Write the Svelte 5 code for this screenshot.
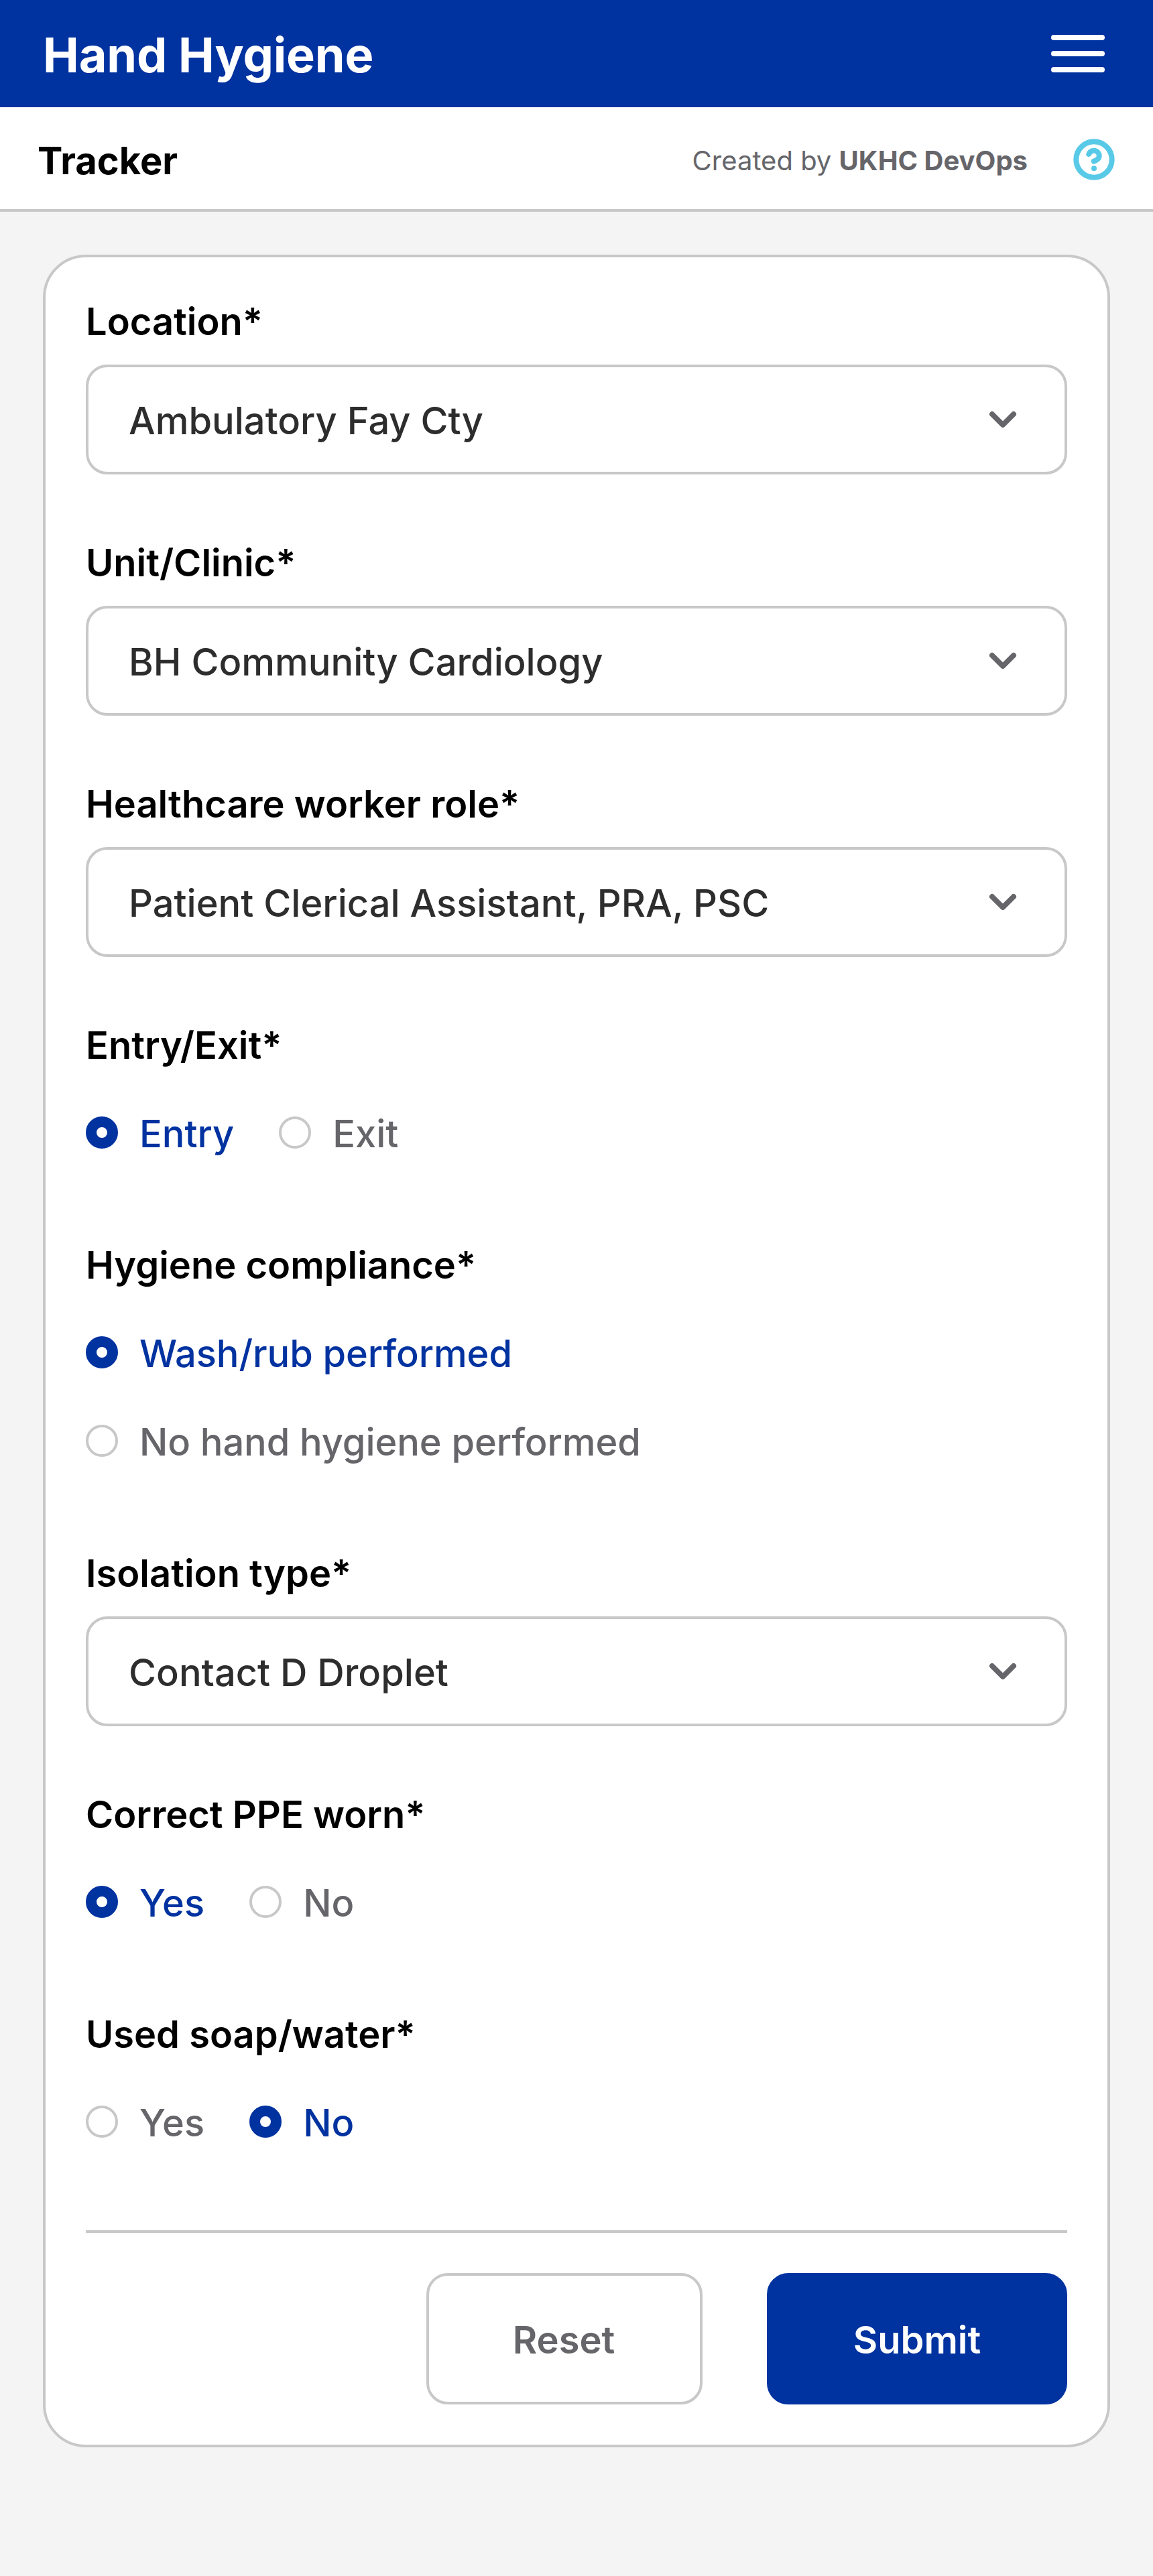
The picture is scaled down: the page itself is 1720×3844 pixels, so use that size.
<script>
  const fields = [
    { label: 'Location*', kind: 'select', value: 'Ambulatory Fay Cty' },
    { label: 'Unit/Clinic*', kind: 'select', value: 'BH Community Cardiology' },
    { label: 'Healthcare worker role*', kind: 'select', value: 'Patient Clerical Assistant, PRA, PSC' },
    { label: 'Entry/Exit*', kind: 'radio', options: ['Entry', 'Exit'], value: 'Entry' },
    {
      label: 'Hygiene compliance*',
      kind: 'radio',
      stacked: true,
      options: ['Wash/rub performed', 'No hand hygiene performed'],
      value: 'Wash/rub performed'
    },
    { label: 'Isolation type*', kind: 'select', value: 'Contact D Droplet' },
    { label: 'Correct PPE worn*', kind: 'radio', options: ['Yes', 'No'], value: 'Yes' },
    { label: 'Used soap/water*', kind: 'radio', options: ['Yes', 'No'], value: 'No' }
  ];
</script>

<div class="page">
  <header class="topbar">
    <h1>Hand Hygiene</h1>
    <div class="burger"><span></span><span></span><span></span></div>
  </header>

  <div class="subbar">
    <h2>Tracker</h2>
    <div class="credit">
      <p>Created by <b>UKHC DevOps</b></p>
      <svg class="help" viewBox="0 0 24 24" fill="none" stroke="#58cae7" stroke-width="3" stroke-linecap="round" stroke-linejoin="round">
        <circle cx="12" cy="12" r="10" />
        <path d="M9.09 9a3 3 0 0 1 5.83 1c0 2-3 3-3 3" />
        <path d="M12 17h.01" />
      </svg>
    </div>
  </div>

  <main class="card">
    {#each fields as field}
      <section class="field">
        <h3>{field.label}</h3>
        {#if field.kind === 'select'}
          <div class="select">
            <span>{field.value}</span>
            <svg viewBox="0 0 24 24" fill="none" stroke="#65656a" stroke-width="3" stroke-linecap="round" stroke-linejoin="round">
              <path d="M6 9l6 6 6-6" />
            </svg>
          </div>
        {:else}
          <div class="options" class:stacked={field.stacked}>
            {#each field.options as option}
              <div class="option" class:selected={option === field.value}>
                <i></i><span>{option}</span>
              </div>
            {/each}
          </div>
        {/if}
      </section>
    {/each}

    <footer class="actions">
      <button class="reset">Reset</button>
      <button class="submit">Submit</button>
    </footer>
  </main>
</div>

<style>
  :global(body) {
    background: #f4f4f4;
  }
  .page {
    min-height: 3844px;
    box-sizing: border-box;
    background: #f4f4f4;
    font-family: Inter, 'Liberation Sans', sans-serif;
    font-size: 56px;
    line-height: 68px;
    color: #000;
  }
  h1, h2, h3, p {
    margin: 0;
  }
  .topbar {
    display: flex;
    align-items: center;
    justify-content: space-between;
    height: 160px;
    padding: 0 72px 0 64px;
    box-sizing: border-box;
    background: #0032a0;
    color: #fff;
  }
  h1 {
    font-size: 72px;
    line-height: 88px;
    font-weight: 700;
    letter-spacing: -0.15px;
    padding-top: 4px;
  }
  .burger {
    display: flex;
    flex-direction: column;
    gap: 16px;
  }
  .burger span {
    width: 80px;
    height: 8px;
    border-radius: 4px;
    background: #fff;
  }
  .subbar {
    display: flex;
    align-items: center;
    justify-content: space-between;
    height: 156px;
    padding: 4px 56px 0;
    box-sizing: border-box;
    border-bottom: 4px solid #c8c8c8;
    background: #fff;
  }
  h2 {
    font-size: 56px;
    font-weight: 700;
    padding-top: 4px;
  }
  .credit {
    display: flex;
    align-items: center;
    gap: 67px;
    font-size: 40px;
    line-height: 48px;
    color: #65656a;
  }
  .credit p {
    padding-top: 3px;
  }
  .help {
    width: 64px;
    height: 64px;
  }
  .card {
    margin: 64px 64px 0;
    padding: 60px;
    border: 4px solid #c8c8c8;
    border-radius: 64px;
    background: #fff;
    display: flex;
    flex-direction: column;
    gap: 96px;
  }
  .field {
    display: flex;
    flex-direction: column;
    gap: 32px;
  }
  h3 {
    height: 68px;
    box-sizing: border-box;
    padding-top: 2px;
    font-size: 56px;
    font-weight: 600;
  }
  .select {
    display: flex;
    align-items: center;
    justify-content: space-between;
    height: 164px;
    box-sizing: border-box;
    padding: 0 60px;
    border: 4px solid #c8c8c8;
    border-radius: 32px;
    font-weight: 500;
    color: #2d2d2d;
  }
  .select span {
    padding-top: 3px;
  }
  .select svg {
    width: 64px;
    height: 64px;
  }
  .options {
    display: flex;
    gap: 67px;
    padding: 32px 0;
  }
  .stacked {
    flex-direction: column;
    gap: 64px;
    letter-spacing: -0.1px;
  }
  .option {
    display: flex;
    align-items: center;
    gap: 32px;
    height: 68px;
    font-weight: 500;
    color: #65656a;
  }
  .option span {
    padding-top: 4px;
  }
  .option i {
    width: 48px;
    height: 48px;
    box-sizing: border-box;
    border: 4px solid #c8c8c8;
    border-radius: 50%;
    background: #fff;
  }
  .option.selected {
    color: #0032a0;
  }
  .option.selected i {
    border: 16px solid #0032a0;
  }
  .actions {
    display: flex;
    justify-content: flex-end;
    gap: 96px;
    padding-top: 60px;
    border-top: 4px solid #c8c8c8;
  }
  button {
    height: 196px;
    padding: 3px 0 0;
    border: 4px solid #c8c8c8;
    border-radius: 32px;
    background: #fff;
    font: inherit;
    font-weight: 600;
    color: #65656a;
  }
  .reset {
    width: 412px;
    padding-right: 2px;
  }
  .submit {
    width: 448px;
    border-color: #0032a0;
    background: #0032a0;
    color: #fff;
  }
</style>
